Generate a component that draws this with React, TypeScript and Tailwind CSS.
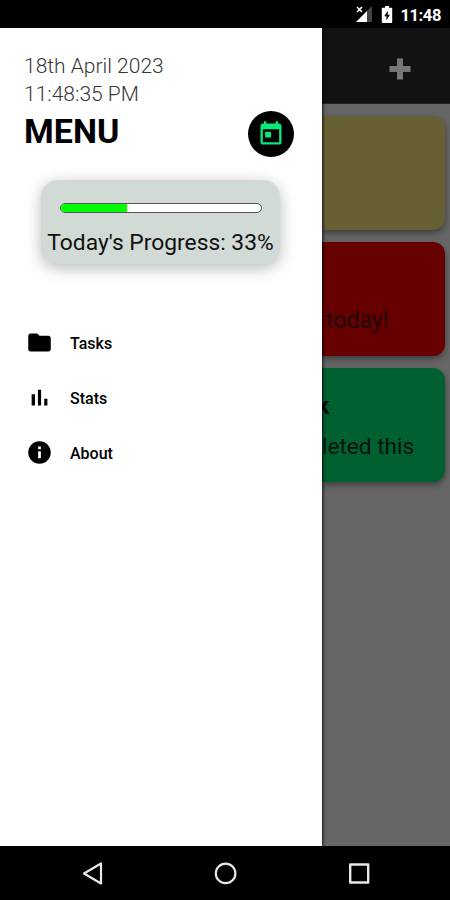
import { memo } from 'react';
import type { ReactNode } from 'react';

interface MenuItemProps {
  label: string;
  children: ReactNode;
}

const MenuItem = memo(function MenuItem({ label, children }: MenuItemProps) {
  return (
    <li className="flex h-[55px] items-center gap-[17px]">
      <svg className="h-[27px] w-[27px] shrink-0" fill="currentColor" viewBox="0 0 24 24">
        {children}
      </svg>
      <span className="pt-[2px] text-[16px] leading-6 font-medium">{label}</span>
    </li>
  );
});

function StatusBar() {
  return (
    <header className="flex h-[28px] shrink-0 items-center justify-end bg-black pr-[9px] text-white">
      <svg className="mr-[8px] h-[18px] w-[18px]" viewBox="0 0 18 18">
        <path d="M17 1v16h-5V6z" fill="#444" />
        <path d="M12 6v11H1z" fill="white" />
        <path d="m2 2 5 5m0-5L2 7" stroke="white" strokeWidth="1.6" />
      </svg>
      <svg className="mr-[7px] h-[19px] w-[12px]" viewBox="0 0 12 18" preserveAspectRatio="none">
        <path d="M4 1h4v1.6h2.4q.8 0 .8.8v12.8q0 .8-.8.8H1.6q-.8 0-.8-.8V3.4q0-.8.8-.8H4z" fill="white" />
        <path d="M6.8 5.5 3.2 10.6h2.2v3.8l3.5-5.2H6.8z" fill="black" />
      </svg>
      <span className="pt-[3px] text-[16.5px] leading-[25px] font-bold tracking-[-0.4px]">11:48</span>
    </header>
  );
}

function ProgressCard() {
  return (
    <div className="mt-[24px] ml-[41px] flex h-[84px] w-[239px] flex-col items-center rounded-[17px] bg-[#d2dad6] pt-[23px] shadow-[0_4px_16px_rgba(0,0,0,0.28)]">
      <div className="h-[10px] w-[202px] overflow-hidden rounded-full border border-[#555] bg-white">
        <div className="-mt-px -ml-px h-[10px] w-[67px] bg-[#00ff00]" />
      </div>
      <p className="mt-[16px] text-[22.8px] leading-[28px] whitespace-nowrap text-[#101010]">Today's Progress: 33%</p>
    </div>
  );
}

function Drawer() {
  return (
    <aside className="relative z-10 w-[322px] shrink-0 bg-white text-black shadow-[1px_0_3px_rgba(0,0,0,0.8)]">
      <div className="flex items-end justify-between pt-[24px] pr-[28px] pl-[24px]">
        <div>
          <p className="text-[21px] leading-[28px] font-light text-[#383838]">18th April 2023</p>
          <p className="text-[21px] leading-[28px] font-light text-[#383838]">11:48:35 PM</p>
          <h1 className="pb-[2px] text-[34px] leading-[46px] font-bold">MENU</h1>
        </div>
        <button className="mb-[-1px] flex h-[46px] w-[46px] items-center justify-center rounded-full bg-black text-[#08e878]">
          <svg className="h-[28px] w-[28px]" fill="currentColor" viewBox="0 0 24 24">
            <path d="M19 3h-1V1h-2v2H8V1H6v2H5c-1.1 0-2 .9-2 2v14c0 1.1.9 2 2 2h14c1.1 0 2-.9 2-2V5c0-1.1-.9-2-2-2zm0 16H5V8h14v11zM7 10h5v5H7z" />
          </svg>
        </button>
      </div>
      <ProgressCard />
      <ul className="mt-[51px] pl-[26px]">
        <MenuItem label="Tasks">
          <path d="M10 4H4c-1.1 0-2 .9-2 2v12c0 1.1.9 2 2 2h16c1.1 0 2-.9 2-2V8c0-1.1-.9-2-2-2h-8z" />
        </MenuItem>
        <MenuItem label="Stats">
          <path d="M5 9.2h3V19H5zM10.6 5h2.8v14h-2.8zm5.6 8H19v6h-2.8z" />
        </MenuItem>
        <MenuItem label="About">
          <path d="M12 2a10 10 0 1 0 0 20 10 10 0 0 0 0-20zm1.2 15h-2.4v-6.2h2.4zm0-8h-2.4V6.6h2.4z" />
        </MenuItem>
      </ul>
    </aside>
  );
}

// The strip of the task list that stays visible beside the open drawer,
// with the scrim already mixed into its colours.
function TaskList() {
  return (
    <main className="flex-1 overflow-hidden bg-[#666]">
      <div className="flex h-[76px] items-center justify-end border-b border-[#222] bg-[#101214] pt-[6px] pr-[39px]">
        <svg className="h-[22px] w-[22px]" viewBox="0 0 22 22">
          <path d="M8 0.5h6V8h7.5v6H14v7.5H8V14H.5V8H8z" fill="#777" />
        </svg>
      </div>
      <div className="flex flex-col gap-[12px] pt-[12px] pr-[5px] text-[#111]">
        <div className="h-[114px] rounded-r-[12px] bg-[#666033] shadow-[0_3px_6px_rgba(0,0,0,0.4)]" />
        <div className="h-[114px] rounded-r-[12px] bg-[#660000] pt-[65px] shadow-[0_3px_6px_rgba(0,0,0,0.4)]">
          <p className="pl-[4px] text-[23px] leading-[28px] text-[#1c0808]">today!</p>
        </div>
        <div className="h-[114px] rounded-r-[12px] bg-[#006030] pt-[23px] shadow-[0_3px_6px_rgba(0,0,0,0.4)]">
          <p className="-ml-[5px] text-[23px] leading-[32px] font-bold text-black">k</p>
          <p className="mt-[10px] text-[22.6px] leading-[28px] whitespace-nowrap text-[#06140c]">leted this</p>
        </div>
      </div>
    </main>
  );
}

function NavigationBar() {
  return (
    <nav className="flex h-[54px] shrink-0 items-center justify-between bg-black pr-[79px] pl-[81px]">
      <svg className="h-[24px] w-[24px]" fill="none" stroke="#e8e8e8" strokeWidth="2.2" strokeLinejoin="round" viewBox="0 0 24 24">
        <path d="M20 2.5v20L3 12.5z" />
      </svg>
      <svg className="h-[24px] w-[24px]" fill="none" stroke="#e8e8e8" strokeWidth="2.2" viewBox="0 0 24 24">
        <circle cx="11.6" cy="12.4" r="9.8" />
      </svg>
      <svg className="h-[24px] w-[24px]" fill="none" stroke="#e8e8e8" strokeWidth="2.4" strokeLinejoin="round" viewBox="0 0 24 24">
        <path d="M3.2 3.5h18v18h-18z" />
      </svg>
    </nav>
  );
}

export default function App() {
  return (
    <div className="flex h-[900px] w-[450px] flex-col overflow-hidden bg-black font-['Roboto',sans-serif]">
      <StatusBar />
      <div className="flex min-h-0 flex-1 overflow-hidden">
        <Drawer />
        <TaskList />
      </div>
      <NavigationBar />
    </div>
  );
}
